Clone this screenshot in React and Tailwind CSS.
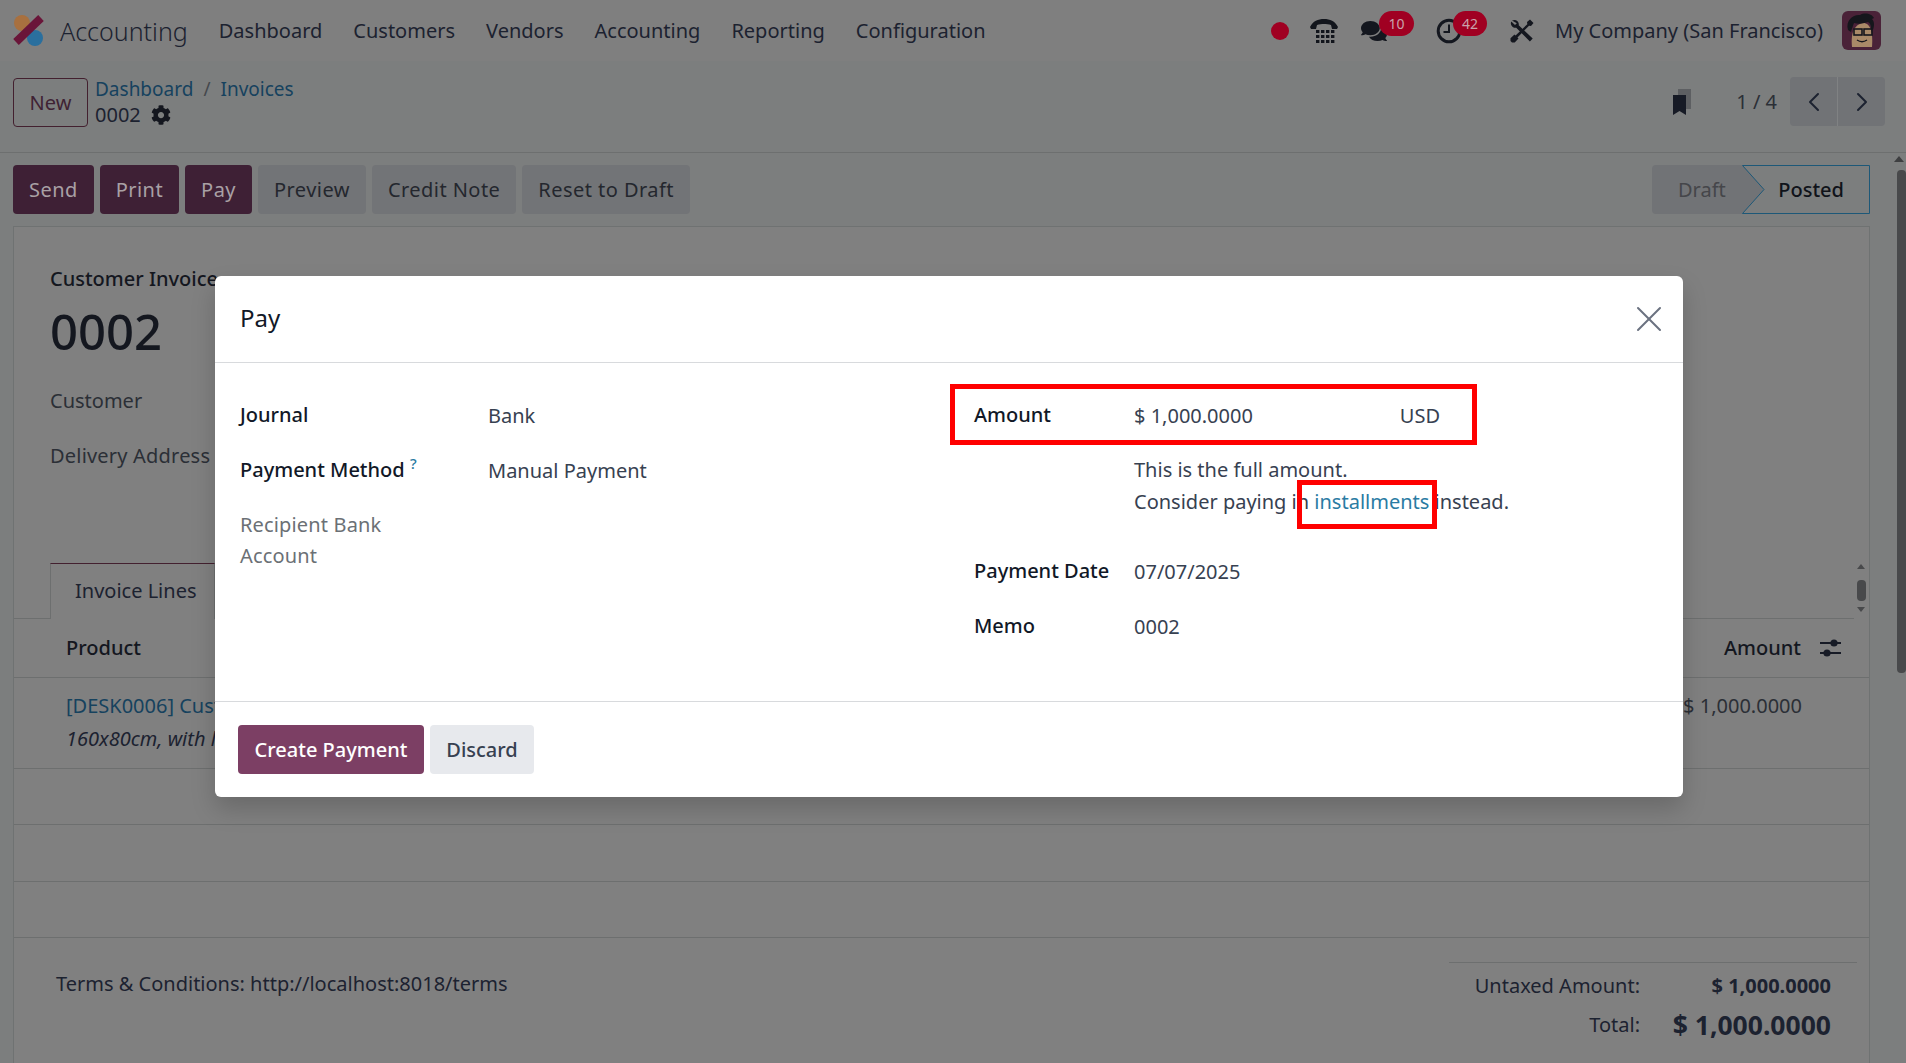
import { ChevronLeft, ChevronRight, X } from 'lucide-react';
import { FaComments, FaCog } from 'react-icons/fa';

const navItems = ['Dashboard', 'Customers', 'Vendors', 'Accounting', 'Reporting', 'Configuration'];

const Logo = () => (
  <svg width="34" height="34" viewBox="0 0 34 34" className="shrink-0">
    <circle cx="9" cy="9" r="8" fill="#a8703f" />
    <circle cx="22" cy="24" r="8" fill="#2a6f9e" />
    <path d="M3 28 L28 4" stroke="#6a1539" strokeWidth="8" />
  </svg>
);

const PhoneIcon = () => (
  <svg width="30" height="26" viewBox="0 0 30 26" fill="#12151c">
    <path d="M1 9c3-6 8-8 14-8s11 2 14 8l-1 2h-5l-1-4c-2-1-5-1-7-1s-5 0-7 1l-1 4H2z" />
    {[12, 17, 22].map((y) =>
      [7, 12, 17, 22].map((x) => <rect key={`${x}-${y}`} x={x} y={y} width="3.4" height="3" />)
    )}
  </svg>
);

const ClockIcon = () => (
  <svg width="26" height="26" viewBox="0 0 26 26" fill="none" stroke="#14171f">
    <circle cx="13" cy="13" r="10.8" strokeWidth="3" />
    <path d="M13 6.5V14H7.5" strokeWidth="2" />
  </svg>
);

const ToolsIcon = () => (
  <svg width="26" height="26" viewBox="0 0 26 26" fill="#14171f">
    <path d="M21 1.5l3.5 3.5-2.5 3-2-.3L7.5 20.5 5.5 18.5 18.3 6.2 18 4z" />
    <path d="M5.5 16.5l4 4-3.8 4H3l-1.500-1.500v-2.700z" />
    <path d="M3 2.500c2-1 4-.8 5.500.7 1.200 1.200 1.500 2.600 1.200 4l14 13.300-2.800 3-13.700-13.800c-1.500.3-2.900 0-4-1.200C1.700 7 1.500 5.200 2.300 3.500L6 7l1.800-1.800z" />
  </svg>
);

const Bookmark = () => (
  <svg width="20" height="28" viewBox="0 0 20 28">
    <path d="M6 1h13v20H6z" fill="#5d5f62" />
    <path d="M1 7h13v20l-6.500-4L1 27z" fill="#171b26" />
  </svg>
);

const AdjustIcon = () => (
  <svg width="22" height="20" viewBox="0 0 22 20" fill="#171b26">
    <rect x="0" y="4" width="21" height="2" />
    <rect x="0" y="14" width="21" height="2" />
    <circle cx="14" cy="5" r="3.600" />
    <circle cx="7" cy="15" r="3.600" />
  </svg>
);

const Avatar = () => (
  <svg width="39" height="39" viewBox="0 0 39 39" className="rounded-md">
    <rect width="39" height="39" fill="#4a2238" />
    <path d="M10 36c-1-10 0-22 11-24 8 0 10 10 9 24z" fill="#a98a68" />
    <path d="M6 19C3 9 12 3 18 4c5-3 12-1 14 3l-2 1c3 3 2 8 1 11l-2-1c0-4-1-6-3-7-6 2-10 2-14 1-1 3-2 5-3 9z" fill="#15161c" />
    <rect x="12" y="18" width="8" height="6" fill="none" stroke="#15161c" strokeWidth="1.600" />
    <rect x="22" y="18" width="8" height="6" fill="none" stroke="#15161c" strokeWidth="1.600" />
    <path d="M15 29c3 2 7 2 10 0" stroke="#15161c" strokeWidth="1.400" fill="none" />
  </svg>
);

const Badge = ({ children, className }) => (
  <span className={`absolute top-[-7px] h-[25px] rounded-full bg-[#a00022] text-[#c9a3ac] text-[14px] leading-[25px] text-center ${className}`}>
    {children}
  </span>
);

const Field = ({ label, children, width }) => (
  <div className="flex h-[55px] items-center">
    <div className={`shrink-0 ${width} font-medium text-[#111827]`}>{label}</div>
    <div className="pt-0.5 text-[#374151]">{children}</div>
  </div>
);

const App = () => {
  return (
    <div className="relative h-screen w-full overflow-hidden bg-[#7c7e7e] text-[20px] leading-[24px] text-[#1c2230] font-['Noto_Sans',sans-serif]">
      {/* navbar */}
      <header className="flex h-[61px] items-center bg-[#7f7f7f] pl-[13px] pr-[25px]">
        <Logo />
        <span className="ml-[13px] text-[25px] font-light text-[#1c2230]">Accounting</span>
        <nav className="ml-[31px] flex gap-[31px]">
          {navItems.map((item) => (
            <a key={item} className="block whitespace-nowrap">{item}</a>
          ))}
        </nav>
        <div className="ml-auto flex items-center">
          <span className="h-[18px] w-[18px] rounded-full bg-[#a00022]" />
          <span className="ml-[20px] flex w-[32px]"><PhoneIcon /></span>
          <span className="relative ml-[20px] flex w-[26px]">
            <FaComments size={26} color="#14171f" />
            <Badge className="left-[18px] w-[35px]">10</Badge>
          </span>
          <span className="relative ml-[49px] flex w-[26px]">
            <ClockIcon />
            <Badge className="left-[17px] w-[34px]">42</Badge>
          </span>
          <span className="ml-[47px] flex w-[26px]"><ToolsIcon /></span>
          <span className="ml-[20px] w-[263px] whitespace-nowrap">My Company (San Francisco)</span>
          <span className="ml-[24px] flex"><Avatar /></span>
        </div>
      </header>

      {/* control panel */}
      <div className="flex h-[92px] items-start border-b border-[#6d6f6f] pl-[13px] pr-[21px] pt-[16px]">
        <button className="mt-[1px] h-[49px] w-[75px] rounded-[4px] border border-[#43202f] text-[#3f2233]">New</button>
        <div className="-mt-[1px] ml-[7px]">
          <div className="flex h-[26px] items-center text-[19px] text-[#16425e]">
            <a>Dashboard</a>
            <span className="mx-[10px] text-[#45484d]">/</span>
            <a>Invoices</a>
          </div>
          <div className="flex h-[26px] items-center gap-[10px]">
            0002 <FaCog size={20} color="#14171f" />
          </div>
        </div>
        <div className="ml-auto flex items-center">
          <Bookmark />
          <span className="ml-[44px] text-[#2b2f36]">1 / 4</span>
          <div className="ml-[13px] flex h-[49px] w-[95px] divide-x divide-[#808283] rounded-[4px] bg-[#717376]">
            <button className="flex flex-1 items-center justify-center text-[#1c2230]"><ChevronLeft size={32} strokeWidth={1.5} /></button>
            <button className="flex flex-1 items-center justify-center text-[#1c2230]"><ChevronRight size={32} strokeWidth={1.5} /></button>
          </div>
        </div>
      </div>

      {/* action buttons and status */}
      <div className="flex h-[73px] items-start pl-[13px] pr-[36px] pt-[12px]">
        <div className="flex gap-[6px] tracking-[0.45px]">
          {['Send', 'Print', 'Pay'].map((b) => (
            <button key={b} className="h-[49px] rounded-[4px] bg-[#3e2035] px-[16px] text-[#a9a0a5]">{b}</button>
          ))}
          {['Preview', 'Credit Note', 'Reset to Draft'].map((b) => (
            <button key={b} className="h-[49px] rounded-[4px] bg-[#727477] px-[16px] text-[#24272e]">{b}</button>
          ))}
        </div>
        <div className="ml-auto flex h-[49px]">
          <div className="w-[112px] rounded-l-[4px] bg-[#717376] pl-[26px] leading-[49px] text-[#45464a]">Draft</div>
          <div className="relative -ml-[22px] flex w-[128px] items-center justify-end pr-[26px] font-medium text-[#10131a]">
            <svg width="128" height="49" viewBox="0 0 128 49" className="absolute inset-0">
              <path d="M0.500 0.500H127.500V48.500H0.500L22 24.500Z" fill="#7c7e7e" stroke="#1d5878" />
            </svg>
            <span className="relative">Posted</span>
          </div>
        </div>
      </div>

      {/* form sheet */}
      <div className="ml-[13px] w-[1857px] border border-[#6f7272] bg-[#808080] pb-[100px] pt-[40px]">
        <div className="pl-[36px]">
          <div className="font-medium text-[#14171f]">Customer Invoice</div>
          <div className="mt-[12px] text-[49px] font-medium leading-[56px] text-[#14171f]">0002</div>
          <div className="mt-[30px] text-[#2b2f36]">Customer</div>
          <div className="mt-[31px] tracking-[0.2px] text-[#2b2f36]">Delivery Address</div>
        </div>

        <div className="mt-[95px] mr-[15px] flex h-[56px] border-b border-[#6d6f6f] pl-[36px]">
          <div className="h-[56px] w-[165px] border-x border-t border-x-[#6d6f6f] border-t-[#43202f] bg-[#808080] pl-[24px] leading-[54px]">Invoice Lines</div>
        </div>

        {/* lines table */}
        <div className="flex h-[59px] items-center justify-between border-b border-[#6d6f6f] pl-[52px] pr-[27px] font-medium text-[#14171f]">
          <span>Product</span>
          <span className="flex items-center gap-[19px]">Amount <AdjustIcon /></span>
        </div>
        <div className="flex h-[91px] justify-between border-b border-[#6d6f6f] pl-[52px] pr-[67px] pt-[16px]">
          <div>
            <a className="block text-[#16425e]">[DESK0006] Customizable Desk</a>
            <div className="mt-[9px] italic text-[#1c2230]">160x80cm, with large legs</div>
          </div>
          <span className="text-[#2b2f36]">$ 1,000.0000</span>
        </div>
        <div className="h-[56px] border-b border-[#6d6f6f]" />
        <div className="h-[57px] border-b border-[#6d6f6f]" />
        <div className="h-[56px] border-b border-[#6d6f6f]" />

        {/* notes and totals */}
        <div className="flex justify-between pl-[42px] pr-[12px]">
          <div className="mt-[34px] text-[#1c2230]">Terms &amp; Conditions: http://localhost:8018/terms</div>
          <div className="mt-[24px] w-[408px] border-t border-[#6d6f6f] pt-[11px] text-[#1c2230]">
            <div className="grid grid-cols-[191px_191px] items-center justify-start">
              <span className="text-right">Untaxed Amount:</span>
              <span className="text-right font-bold">$ 1,000.0000</span>
              <span className="mt-[11px] text-right leading-[32px]">Total:</span>
              <span className="mt-[11px] text-right text-[26.5px] font-bold leading-[32px]">$ 1,000.0000</span>
            </div>
          </div>
        </div>
      </div>

      {/* scrollbars */}
      <div className="absolute right-0 top-[170px] h-[503px] w-[9px] rounded-[4px] bg-[#48494b]" />
      <div className="absolute right-[2px] top-[156px] h-0 w-0 border-x-[5px] border-b-[6px] border-x-transparent border-b-[#3e3f41]" />
      <div className="absolute left-[1857px] top-[564px] h-0 w-0 border-x-[4px] border-b-[5px] border-x-transparent border-b-[#48494b]" />
      <div className="absolute left-[1857px] top-[580px] h-[21px] w-[9px] rounded-[4px] bg-[#48494b]" />
      <div className="absolute left-[1857px] top-[607px] h-0 w-0 border-x-[4px] border-t-[5px] border-x-transparent border-t-[#48494b]" />

      {/* payment dialog */}
      <div className="absolute left-[215px] top-[276px] h-[521px] w-[1468px] rounded-[6px] bg-white text-[#374151] shadow-[0_12px_24px_rgba(0,0,0,0.18)]">
        <div className="flex h-[87px] items-center justify-between border-b border-[#d8dadd] pl-[25px] pr-[12px]">
          <h4 className="-mt-[3px] text-[24px] font-normal text-[#111827]">Pay</h4>
          <X size={44} strokeWidth={1.1} className="text-[#6b7280]" />
        </div>

        <div className="flex h-[339px] border-b border-[#d8dadd] pl-[25px] pt-[24px]">
          <div className="w-[734px]">
            <Field label="Journal" width="w-[248px]">Bank</Field>
            <Field
              label={<span>Payment Method <sup className="text-[15px] text-[#2a7ba3]">?</sup></span>}
              width="w-[248px]"
            >
              Manual Payment
            </Field>
            <div className="mt-[12px] w-[160px] leading-[31px] tracking-[0.15px] text-[#6b7075]">Recipient Bank Account</div>
          </div>
          <div>
            <div className="flex h-[55px] items-center">
              <div className="w-[160px] font-medium text-[#111827]">Amount</div>
              <div className="flex w-[306px] justify-between pt-0.5">
                <span>$ 1,000.0000</span>
                <span>USD</span>
              </div>
            </div>
            <div className="mt-[12px] pl-[160px] leading-[32px]">
              <div>This is the full amount.</div>
              <div>Consider paying in <a className="text-[#2a7ba3]">installments</a> instead.</div>
            </div>
            <div className="mt-[25px]">
              <Field label="Payment Date" width="w-[160px]">07/07/2025</Field>
              <Field label="Memo" width="w-[160px]">0002</Field>
            </div>
          </div>
        </div>

        <div className="flex gap-[6px] pl-[23px] pt-[23px]">
          <button className="h-[49px] w-[186px] rounded-[4px] bg-[#7c3f64] font-medium text-white">Create Payment</button>
          <button className="h-[49px] w-[104px] rounded-[4px] bg-[#e7e9ed] font-medium text-[#374151]">Discard</button>
        </div>

        {/* annotation boxes */}
        <div className="absolute left-[735px] top-[108px] h-[61px] w-[527px] border-[5px] border-[#ff0000]" />
        <div className="absolute left-[1082px] top-[204px] h-[49px] w-[140px] border-[5px] border-[#ff0000]" />
      </div>
    </div>
  );
};

export default App;
